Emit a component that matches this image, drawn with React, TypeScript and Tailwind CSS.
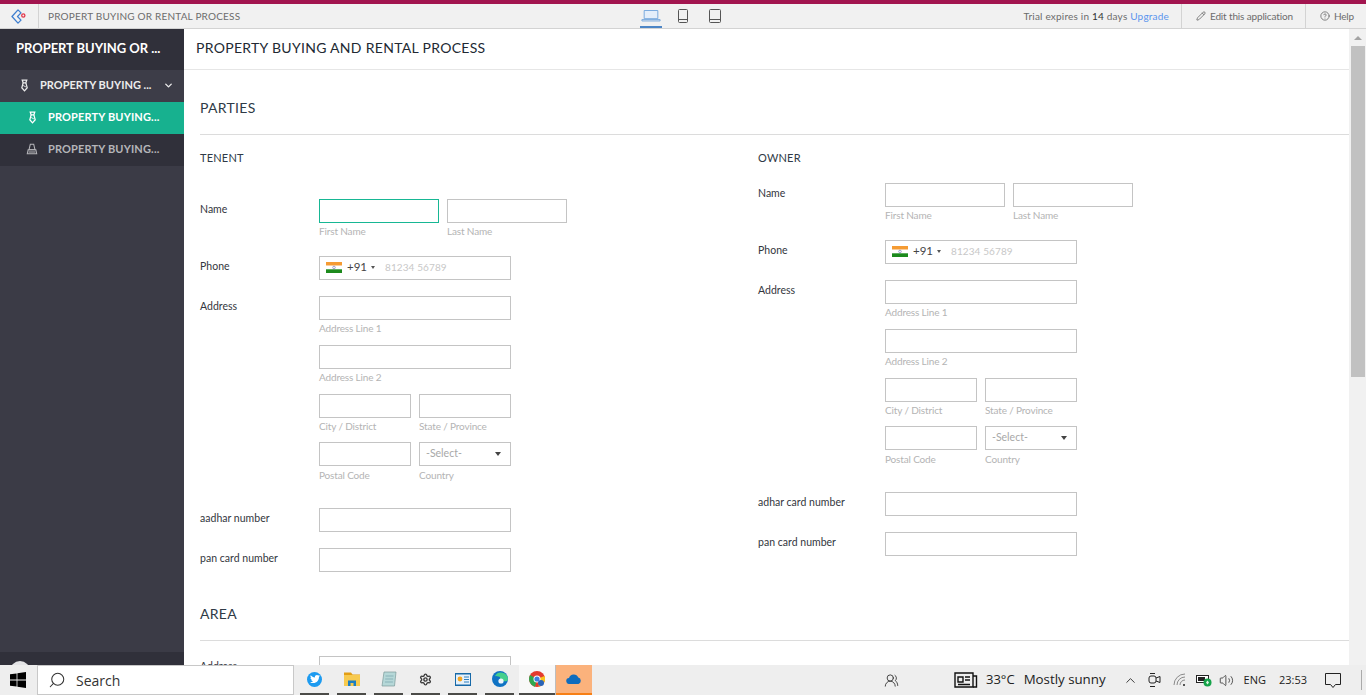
import React from 'react';
import { ChevronDown, ChevronUp, CircleHelp, Pencil, Search, Settings, UsersRound, Volume2 } from 'lucide-react';
import { FaTwitter } from 'react-icons/fa';

const lato = { fontFamily: 'Lato, sans-serif' };

function Tie({ className }: { className?: string }) {
  return (
    <svg viewBox="0 0 10 14" className={className} fill="none" stroke="currentColor" strokeWidth="1.4">
      <path d="M2.500 1h5L6.500 4h-3z" />
      <path d="M3.500 4L2 9.500 5 13l3-3.500L6.500 4" />
      <path d="M3.500 7l3 1.500" strokeWidth="1" />
    </svg>
  );
}

function Stamp({ className }: { className?: string }) {
  return (
    <svg viewBox="0 0 14 14" className={className} fill="none" stroke="currentColor" strokeWidth="1.2">
      <path d="M5 1.500h4L10.500 8h-7z" />
      <path d="M2.500 8h9l1 4.500h-11z" />
      <path d="M3 10.500h8" />
    </svg>
  );
}

function Logo() {
  return (
    <svg viewBox="0 0 15 15" className="w-[15px] h-[15px]" fill="none">
      <path d="M7 0.900L1 7.500 7 14.100l3-3L6.500 7.500 10 3.900z" stroke="#3f7fd0" strokeWidth="1.3" strokeLinejoin="round" />
      <circle cx="12.300" cy="6.500" r="1.600" stroke="#e2364a" strokeWidth="1.300" />
    </svg>
  );
}

function Flag() {
  return (
    <svg viewBox="0 0 16 11" className="w-4 h-[11px] shrink-0">
      <rect width="16" height="3.700" fill="#f59b33" />
      <rect y="3.700" width="16" height="3.600" fill="#ffffff" />
      <rect y="7.300" width="16" height="3.700" fill="#1d8a1d" />
      <circle cx="8" cy="5.500" r="1.300" fill="none" stroke="#6a6ab0" strokeWidth="0.600" />
    </svg>
  );
}

function TextInput({ className, focused }: { className: string; focused?: boolean }) {
  return (
    <input
      className={`h-6 block bg-white border outline-none ${focused ? 'border-[#17b794]' : 'border-[#c4c4c4]'} ${className}`}
    />
  );
}

function Hint({ children, low }: { children: React.ReactNode; low?: boolean }) {
  return (
    <div className={`${low ? 'mt-[2px]' : 'mt-px'} text-[10px] leading-[14px] tracking-[-0.15px] text-[#b4b4b4]`}>{children}</div>
  );
}

function Row({ label, width, className, children }: { label: string; width: string; className?: string; children: React.ReactNode }) {
  return (
    <div className={`flex ${className ?? ''}`}>
      <div className={`${width} shrink-0 pt-[3px] text-[10.5px] leading-[14px] tracking-[0.02px] text-[#33363d]`}>{label}</div>
      <div>{children}</div>
    </div>
  );
}

function Party({ title, idLabel, width, topGap, focused }: { title: string; idLabel: string; width: string; topGap: string; focused?: boolean }) {
  return (
    <div>
      <div className="text-[11px] leading-[14px] tracking-[0.2px] text-[#2f3a46]">{title}</div>
      <Row label="Name" width={width} className={topGap}>
        <div className="flex gap-2">
          <div>
            <TextInput className="w-[120px]" focused={focused} />
            <Hint>First Name</Hint>
          </div>
          <div>
            <TextInput className="w-[120px]" />
            <Hint>Last Name</Hint>
          </div>
        </div>
      </Row>
      <Row label="Phone" width={width} className="mt-[18px]">
        <div className="w-[192px] h-6 border border-[#c4c4c4] flex items-center pl-[6px] pb-[2px]">
          <Flag />
          <span className="ml-[5px] text-[11.5px] text-[#444]">+91</span>
          <span className="ml-[4px] w-0 h-0 border-x-[2px] border-x-transparent border-t-[3px] border-t-[#555]" />
          <span className="ml-[10px] text-[10px] tracking-[0.1px] text-[#c8c8c8]">81234 56789</span>
        </div>
      </Row>
      <Row label="Address" width={width} className="mt-4">
        <TextInput className="w-[192px]" />
        <Hint>Address Line 1</Hint>
        <TextInput className="w-[192px] mt-[10px]" />
        <Hint>Address Line 2</Hint>
        <div className="flex gap-2 mt-[10px]">
          <div>
            <TextInput className="w-[92px]" />
            <Hint>City / District</Hint>
          </div>
          <div>
            <TextInput className="w-[92px]" />
            <Hint>State / Province</Hint>
          </div>
        </div>
        <div className="flex gap-2 mt-[9px]">
          <div>
            <TextInput className="w-[92px]" />
            <Hint low>Postal Code</Hint>
          </div>
          <div>
            <div className="w-[92px] h-6 border border-[#c4c4c4] flex items-center justify-between pl-[6px] pr-[9px]">
              <span className="text-[10.5px] text-[#a8a8a8]">-Select-</span>
              <span className="w-0 h-0 border-x-[3px] border-x-transparent border-t-[4px] border-t-[#444]" />
            </div>
            <Hint low>Country</Hint>
          </div>
        </div>
      </Row>
      <Row label={idLabel} width={width} className="mt-[26px]">
        <TextInput className="w-[192px]" />
      </Row>
      <Row label="pan card number" width={width} className="mt-4">
        <TextInput className="w-[192px]" />
      </Row>
    </div>
  );
}

function SectionTitle({ children }: { children: React.ReactNode }) {
  return (
    <div className="h-[65px] box-border pt-[10px] border-b border-[#dcdcdc] flex items-center text-[14px] tracking-[0.3px] text-[#2f3a46]">
      {children}
    </div>
  );
}

function TaskIcon({ children, active, open }: { children: React.ReactNode; active?: boolean; open?: boolean }) {
  if (open) {
    return (
      <div className="w-9 h-full bg-[#fbb27c] flex items-center justify-center border-b-[2px] border-[#f77f14]">{children}</div>
    );
  }
  return (
    <div className={`flex flex-col items-center h-full ${active ? 'w-9 bg-[#f8f8f8]' : 'w-[29px]'}`}>
      <div className="flex-1 flex items-center justify-center">{children}</div>
      <div className="h-[2px] w-full bg-[#4b4b48]" />
    </div>
  );
}

export default function App() {
  return (
    <div className="w-[1366px] h-[695px] overflow-hidden flex flex-col bg-white" style={lato}>
      <div className="h-1 bg-[#a2154f] shrink-0" />
      {/* top toolbar */}
      <div className="h-[25px] shrink-0 bg-[#f1f1f1] border-b border-[#d3d3d3] flex items-center text-[#6c6c6c]">
        <div className="w-[39px] h-full border-r border-[#d3d3d3] flex items-center justify-center pr-[2px]">
          <Logo />
        </div>
        <div className="w-[601px] pl-[9px] text-[10px] tracking-[0.2px]">PROPERT BUYING OR RENTAL PROCESS</div>
        <div className="flex items-center h-full">
          <div className="w-[22px] h-full flex items-center justify-center border-b-2 border-[#4d86c6]">
            <svg viewBox="0 0 22 14" className="w-[20px] h-[13px]" fill="none" stroke="#6fa3dc" strokeWidth="1">
              <path d="M3.500 1.500h15v9h-15z" fill="#e4eefa" />
              <path d="M1 11.500h20v1.500H1z" />
            </svg>
          </div>
          <svg viewBox="0 0 10 14" className="w-[10px] h-[14px] ml-4" fill="none" stroke="#555" strokeWidth="1">
            <rect x="0.500" y="0.500" width="9" height="13" rx="1" />
            <path d="M0.500 10.500h9" />
          </svg>
          <svg viewBox="0 0 12 14" className="w-3 h-[14px] ml-[21px]" fill="none" stroke="#555" strokeWidth="1">
            <rect x="0.500" y="0.500" width="11" height="13" rx="1" />
            <path d="M0.500 10.500h11" />
          </svg>
        </div>
        <div className="ml-auto text-[10px] tracking-[0.2px] pr-3">
          Trial expires in <span className="text-[#333]">14</span> days <span className="text-[#5b95ee]">Upgrade</span>
        </div>
        <div className="w-[124px] h-full border-l border-[#d3d3d3] flex items-center pl-[14px] text-[10px] tracking-[-0.15px]">
          <Pencil className="w-[10px] h-[10px] mr-[4px]" />
          Edit this application
        </div>
        <div className="w-[61px] h-full border-l border-[#d3d3d3] flex items-center pl-[14px] text-[10px] tracking-[-0.2px]">
          <CircleHelp className="w-[10px] h-[10px] mr-[4px]" />
          Help
        </div>
      </div>

      <div className="flex-1 min-h-0 flex">
        {/* sidebar */}
        <div className="w-[184px] shrink-0 flex flex-col bg-[#3b3b46]">
          <div className="h-[41px] shrink-0 bg-[#30303a] flex items-center pl-4 pb-[2px] text-[13px] font-bold tracking-[-0.05px] text-white">
            PROPERT BUYING OR ...
          </div>
          <div className="h-8 shrink-0 bg-[#3d3d48] flex items-center pl-[20px] pb-[2px] text-[11px] font-bold text-[#ececec]">
            <Tie className="w-[9px] h-[13px] mr-[11px]" />
            <span>PROPERTY BUYING ...</span>
            <ChevronDown className="w-[11px] h-[11px] ml-[12px]" strokeWidth={3} />
          </div>
          <div className="h-8 shrink-0 bg-[#17b18f] flex items-center pl-7 pb-[2px] text-[11px] font-bold tracking-[0.15px] text-white">
            <Tie className="w-[9px] h-[13px] mr-[11px]" />
            <span>PROPERTY BUYING...</span>
          </div>
          <div className="h-8 shrink-0 bg-[#30303a] flex items-center pl-[26px] pb-[2px] text-[11px] font-bold tracking-[0.15px] text-[#b5b5b9]">
            <Stamp className="w-3 h-3 mr-[10px]" />
            <span>PROPERTY BUYING...</span>
          </div>
          <div className="flex-1" />
          <div className="h-[13px] shrink-0 bg-[#30303a] overflow-hidden pl-[10px] pt-[9px]">
            <div className="w-[20px] h-[20px] rounded-full bg-[#e4e4e6]" />
          </div>
        </div>

        {/* form area */}
        <div className="flex-1 min-w-0 overflow-hidden">
          <div className="h-[41px] box-border border-b border-[#e6e6e6] flex items-center pl-3 pb-1 text-[14px] tracking-[0.3px] text-[#222933]">
            PROPERTY BUYING AND RENTAL PROCESS
          </div>
          <div className="pl-4">
            <SectionTitle>PARTIES</SectionTitle>
            <div className="pt-4 grid grid-cols-[558px_1fr]">
              <Party title="TENENT" idLabel="aadhar number" width="w-[119px]" topGap="mt-[34px]" focused />
              <Party title="OWNER" idLabel="adhar card number" width="w-[127px]" topGap="mt-[18px]" />
            </div>
            <div className="mt-1">
              <SectionTitle>AREA</SectionTitle>
            </div>
            <Row label="Address" width="w-[119px]" className="mt-[15px]">
              <TextInput className="w-[192px]" />
            </Row>
          </div>
        </div>

        {/* scrollbar */}
        <div className="w-[17px] shrink-0 bg-[#f1f1f1] flex flex-col items-center">
          <div className="h-[17px] shrink-0 flex items-center justify-center">
            <span className="w-0 h-0 border-x-[4px] border-x-transparent border-b-[4px] border-b-[#a3a3a3]" />
          </div>
          <div className="w-[14px] h-[331px] bg-[#c1c1c1]" />
        </div>
      </div>

      {/* windows taskbar */}
      <div className="h-[30px] shrink-0 bg-[#eeeeee] flex items-center" style={{ fontFamily: '"Open Sans", sans-serif' }}>
        <div className="w-[36px] mr-px flex justify-center">
          <svg viewBox="0 0 16 16" className="w-4 h-4" fill="#000">
            <path d="M0 2.300l6.600-.9v6.200H0zM7.400 1.300L16 0v7.600H7.400zM0 8.400h6.600v6.200L0 13.700zM7.400 8.400H16V16l-8.600-1.300z" />
          </svg>
        </div>
        <div className="w-[257px] h-full box-border bg-white border border-[#c8c8c8] flex items-center pl-[10px] text-[14px] text-[#333]">
          <Search className="w-[18px] h-[18px] -scale-x-100 mr-[10px]" strokeWidth={1.4} />
          Search
        </div>
        <div className="h-full ml-[6px] flex">
          <div className="flex gap-2 h-full">
            <TaskIcon>
              <span className="w-[15px] h-[15px] rounded-full bg-[#1d9bf0] flex items-center justify-center">
                <FaTwitter className="w-[10px] h-[10px] text-white" />
              </span>
            </TaskIcon>
            <TaskIcon>
              <svg viewBox="0 0 16 16" className="w-4 h-4">
                <path d="M0 1.500h7l1.500 2H16v1.500H0z" fill="#e39e14" />
                <path d="M0 4h16v11H0z" fill="#f7ca4f" />
                <path d="M4 15V9.500h8V15h-2.500v-3h-3v3z" fill="#1b7fc4" />
              </svg>
            </TaskIcon>
            <TaskIcon>
              <svg viewBox="0 0 16 16" className="w-4 h-4">
                <path d="M3 1h12l-1.500 14H1z" fill="#b6d8d8" stroke="#7b9a9a" strokeWidth="0.700" />
                <path d="M4.500 5h8M4.200 8h8M3.900 11h8" stroke="#6f9aa6" strokeWidth="0.600" />
              </svg>
            </TaskIcon>
            <TaskIcon>
              <Settings className="w-[13px] h-[13px] text-[#3c3c3c]" strokeWidth={2.6} />
            </TaskIcon>
            <TaskIcon>
              <svg viewBox="0 0 16 13" className="w-4 h-[13px]">
                <rect width="16" height="13" fill="#1769a8" />
                <rect x="1" y="1.500" width="14" height="10" fill="#e6f1fa" />
                <circle cx="5" cy="6" r="2.400" fill="#f5a623" />
                <path d="M9 4h5M9 6.500h5M9 9h5" stroke="#2f80c0" strokeWidth="1" />
              </svg>
            </TaskIcon>
            <TaskIcon>
              <svg viewBox="0 0 16 16" className="w-4 h-4">
                <circle cx="8" cy="8" r="8" fill="#0f73c4" />
                <path d="M3 5a7 7 0 0 1 13 3c0 2-2 2.600-4 2.200C9 9.500 7.500 8 8 6 6 5 4 5.500 3 5z" fill="#45cf8c" />
                <circle cx="9" cy="10" r="2.600" fill="#eef5fb" />
              </svg>
            </TaskIcon>
          </div>
          <div className="ml-[5px]">
            <TaskIcon active>
              <svg viewBox="0 0 16 16" className="w-4 h-4">
                <circle cx="8" cy="8" r="8" fill="#e33b2e" />
                <path d="M8 8L1.100 4A8 8 0 0 0 6 15.700z" fill="#2fa84f" />
                <path d="M8 8l2 7.700A8 8 0 0 0 15.500 5z" fill="#f8c31c" />
                <circle cx="8" cy="8" r="3.500" fill="#fff" />
                <circle cx="8" cy="8" r="2.600" fill="#3f7fe0" />
                <circle cx="12" cy="12" r="3" fill="#2a64b8" />
              </svg>
            </TaskIcon>
          </div>
          <div className="w-px h-full bg-[#bdbdbd]" />
          <TaskIcon open>
            <svg viewBox="0 0 16 10" className="w-4 h-[10px]">
              <path d="M3.500 10a3 3 0 0 1-.5-6 5 5 0 0 1 9.300-.5A3.400 3.400 0 0 1 12.500 10z" fill="#0f6cbd" />
            </svg>
          </TaskIcon>
        </div>
        <UsersRound className="w-[15px] h-[15px] ml-[292px] text-[#222]" strokeWidth={1.3} />
        <svg viewBox="0 0 24 16" className="w-6 h-4 ml-[55px]" fill="none" stroke="#111" strokeWidth="1.400">
          <path d="M1 1h18v14H1z" />
          <path d="M19 4h3.500v11H19" />
          <path d="M4 5h5v5H4zM11 5h5M11 8h5M4 12.500h12" />
        </svg>
        <span className="ml-[8px] text-[13px] text-[#222]">33°C</span>
        <span className="ml-[9px] text-[13.3px] text-[#222]">Mostly sunny</span>
        <ChevronUp className="w-[15px] h-[15px] ml-[17px] text-[#222]" strokeWidth={1.4} />
        <svg viewBox="0 0 14 16" className="w-[14px] h-4 ml-[10px]" fill="none" stroke="#222" strokeWidth="1">
          <rect x="1" y="4" width="7" height="7" rx="2" />
          <path d="M8 6l4-1.500v6L8 9M2 1.500h5M2 14.500h5" />
        </svg>
        <svg viewBox="0 0 14 14" className="w-[14px] h-[14px] ml-[11px]" fill="none" stroke="#8a8a8a" strokeWidth="1">
          <path d="M1 12a11 11 0 0 1 11-11M4 12a8 8 0 0 1 8-8M7 12a5 5 0 0 1 5-5" />
          <circle cx="11" cy="12" r="1" fill="#222" stroke="none" />
        </svg>
        <svg viewBox="0 0 16 14" className="w-4 h-[14px] ml-[9px]">
          <rect x="0.500" y="2.500" width="12" height="7" fill="#fff" stroke="#222" />
          <rect x="2" y="4" width="7" height="4" fill="#222" />
          <circle cx="11.500" cy="9.500" r="4" fill="#16a34a" />
          <path d="M11.500 7.500l-1.500 2 1.500 2 1.500-2z" fill="#dff5e5" />
        </svg>
        <Volume2 className="w-[15px] h-[15px] ml-[7px] text-[#222]" strokeWidth={1.2} />
        <span className="ml-[10px] text-[11px] text-[#222]">ENG</span>
        <span className="ml-[13px] text-[11px] text-[#222]">23:53</span>
        <svg viewBox="0 0 16 15" className="w-4 h-[15px] ml-[18px]" fill="none" stroke="#222" strokeWidth="1">
          <path d="M0.500 0.500h15v11h-5l-2.500 3-2.500-3h-5z" />
        </svg>
        <div className="w-px h-[20px] bg-[#aaaaaa] ml-[20px]" />
      </div>
    </div>
  );
}
